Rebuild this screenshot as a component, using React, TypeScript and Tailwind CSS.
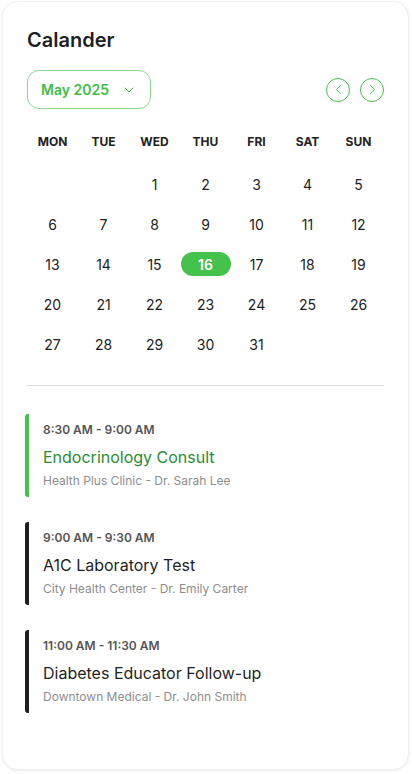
import React from "react";
import { ChevronDown, ChevronLeft, ChevronRight } from "lucide-react";

type Appointment = {
  time: string;
  title: string;
  place: string;
  active?: boolean;
};

const weekdays = ["MON", "TUE", "WED", "THU", "FRI", "SAT", "SUN"];

const appointments: Appointment[] = [
  {
    time: "8:30 AM - 9:00 AM",
    title: "Endocrinology Consult",
    place: "Health Plus Clinic - Dr. Sarah Lee",
    active: true,
  },
  {
    time: "9:00 AM - 9:30 AM",
    title: "A1C Laboratory Test",
    place: "City Health Center - Dr. Emily Carter",
  },
  {
    time: "11:00 AM - 11:30 AM",
    title: "Diabetes Educator Follow-up",
    place: "Downtown Medical - Dr. John Smith",
  },
];

const days: (number | null)[] = [
  null,
  null,
  ...Array.from({ length: 31 }, (_, i) => i + 1),
];

export default function App() {
  return (
    <div className="min-h-screen bg-white pl-[2px] pt-[1px] font-['Inter','Liberation_Sans',sans-serif]">
      <div className="w-[407px] h-[769px] rounded-2xl bg-white border border-[#f0f0f0] shadow-[0_1px_3px_rgba(0,0,0,0.08)] px-6 pt-6">
        <h2 className="text-[20px] leading-7 font-semibold text-[#1f1f1f]">Calander</h2>

        <div className="mt-4 flex items-center justify-between">
          <button className="h-[39px] w-[124px] rounded-xl border border-[#8bd78f] flex items-center justify-center gap-[12px] text-[14px] font-semibold text-[#3fbe47]">
            May 2025
            <ChevronDown size={16} strokeWidth={1.5} />
          </button>
          <div className="flex items-center gap-[10px]">
            <button className="h-6 w-6 rounded-full border border-[#45c04c] flex items-center justify-center text-[#45c04c]">
              <ChevronLeft size={17} strokeWidth={1.4} />
            </button>
            <button className="h-6 w-6 rounded-full border border-[#45c04c] flex items-center justify-center text-[#45c04c]">
              <ChevronRight size={17} strokeWidth={1.4} />
            </button>
          </div>
        </div>

        <div className="mt-[23px] grid grid-cols-7">
          {weekdays.map((d) => (
            <div key={d} className="h-5 flex items-center justify-center text-[12px] font-bold text-[#222]">
              {d}
            </div>
          ))}
        </div>

        <div className="mt-3 grid grid-cols-7">
          {days.map((d, i) => (
            <div key={i} className="h-10 flex items-center justify-center">
              {d === 16 ? (
                <span className="h-6 w-[50px] rounded-full bg-[#45c24b] text-white text-[14px] font-semibold flex items-center justify-center">
                  {d}
                </span>
              ) : (
                <span className="text-[14px] text-[#222]">{d ?? ""}</span>
              )}
            </div>
          ))}
        </div>

        <hr className="mt-[21px] border-[#dcdcdc]" />

        <div className="mt-[28px] flex flex-col gap-[25px] -ml-[2px]">
          {appointments.map((a) => (
            <div
              key={a.time}
              className={`border-l-4 rounded-[3px] pl-[14px] py-2 ${a.active ? "border-[#45c24b]" : "border-[#1f1f1f]"}`}
            >
              <p className="text-[12px] leading-4 font-semibold text-[#555]">{a.time}</p>
              <p className={`mt-[7px] text-[16px] leading-6 ${a.active ? "text-[#2a8c33]" : "text-[#1f1f1f]"}`}>
                {a.title}
              </p>
              <p className="mt-1 text-[12px] leading-4 text-[#8e8e8e]">{a.place}</p>
            </div>
          ))}
        </div>
      </div>
    </div>
  );
}
